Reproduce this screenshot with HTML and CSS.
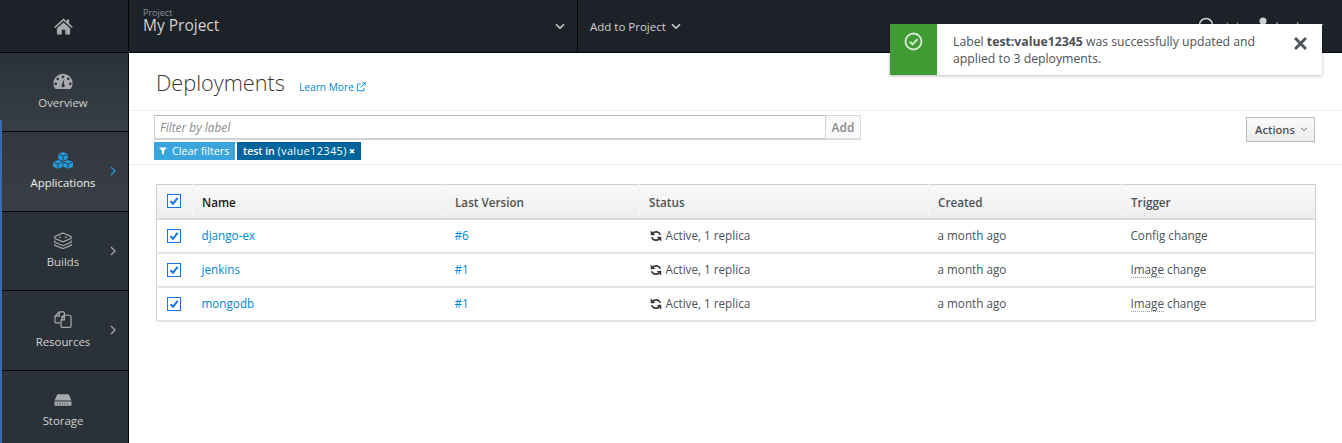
FILE: index.html
```html
<!DOCTYPE html>
<html lang="en">
<head>
<meta charset="utf-8">
<title>Deployments</title>
<link rel="stylesheet" href="styles.css">
</head>
<body>
<header class="topbar">
  <a class="home"><svg class="home-icon" viewBox="0 0 20 18"><path d="M10 0.5 L13.5 3.6 V1.5 H16 V5.8 L20 9.4 L18.8 10.6 L10 3 L1.2 10.6 L0 9.4Z M3 10.8 L10 4.8 L17 10.8 V17.5 H11.8 V12.5 H8.2 V17.5 H3Z"/></svg></a>
  <div class="project">
    <div class="project-names">
      <span class="project-label">Project</span>
      <span class="project-name">My Project</span>
    </div>
    <svg class="chev-down" viewBox="0 0 10 7"><path d="M1 1.2 L5 5.2 L9 1.2"/></svg>
  </div>
  <div class="add-project">Add to Project <svg class="chev-down" viewBox="0 0 10 7"><path d="M1 1.2 L5 5.2 L9 1.2"/></svg></div>
  <div class="top-right">
    <svg class="help" viewBox="0 0 16 16"><circle cx="8" cy="8" r="6.5"/></svg>
    <span class="top-right-text">status</span>
    <svg class="user" viewBox="0 0 10 16"><circle cx="5" cy="4" r="3.5"/><path d="M0 16 V11 Q5 6 10 11 V16Z"/></svg>
    <span class="top-right-text">developer</span>
  </div>
</header>

<div class="main">
  <nav class="sidebar">
    <a class="nav-item">
      <svg class="nav-icon" viewBox="0 0 22 18"><path fill-rule="evenodd" d="M11 0.5 A10.5 10.5 0 0 0 0.5 11 C0.5 13.5 1.3 15.6 2.7 17.2 H19.3 C20.7 15.6 21.5 13.5 21.5 11 A10.5 10.5 0 0 0 11 0.5Z M11 2.4 a1.5 1.5 0 1 1 -0.01 0Z M5.2 4.6 a1.5 1.5 0 1 1 -0.01 0Z M16.8 4.6 a1.5 1.5 0 1 1 -0.01 0Z M3 10 a1.5 1.5 0 1 1 -0.01 0Z M19 10 a1.5 1.5 0 1 1 -0.01 0Z M12.4 6 L12 12 a1.8 1.8 0 1 1 -2.6 1.2Z"/></svg>
      <span>Overview</span>
    </a>
    <a class="nav-item nav-active">
      <svg class="nav-icon" viewBox="0 0 22 18"><path d="M11 0 L16 2.2 V7.2 L11 9.4 L6 7.2 V2.2Z M6 8.4 L10.6 10.4 V15.6 L5.6 17.8 L0.4 15.6 V10.6Z M16 8.4 L21.6 10.6 V15.6 L16.4 17.8 L11.4 15.6 V10.4Z"/><path class="nav-icon-cut" d="M6.2 2.4 L11 4.4 L15.8 2.4 M11 4.4 V9 M0.8 10.8 L5.6 12.8 L10.4 10.8 M5.6 12.8 V17.4 M11.6 10.8 L16.4 12.8 L21.2 10.8 M16.4 12.8 V17.4"/></svg>
      <span>Applications</span>
      <svg class="chev-right" viewBox="0 0 6 10"><path d="M1 1 L5 5 L1 9"/></svg>
    </a>
    <a class="nav-item">
      <svg class="nav-icon nav-outline" viewBox="0 0 20 18"><path d="M10 1 L18.5 4.8 Q19 6 18.5 7 L10 10.5 L1.5 7 Q1 6 1.5 4.8Z M1.5 9 Q1 10 1.5 11 L10 14.5 L18.5 11 Q19 10 18.5 9 M1.5 12.6 Q1 13.6 1.5 14.2 L10 17.5 L18.5 14.2 Q19 13.6 18.5 12.6 M6 5.6 H8 M12 5.6 H14"/></svg>
      <span>Builds</span>
      <svg class="chev-right" viewBox="0 0 6 10"><path d="M1 1 L5 5 L1 9"/></svg>
    </a>
    <a class="nav-item">
      <svg class="nav-icon nav-outline" viewBox="0 0 20 18"><path d="M7 12.5 H2.5 Q1.5 12.5 1.5 11.5 V5.5 L6 1 H10.5 Q11.5 1 11.5 2 V4 M6 1 V5.5 H1.5 M8 6.5 L11.5 4.5 H17 Q18.5 4.5 18.5 6 V16 Q18.5 17.3 17 17.3 H9 Q8 17.3 8 16 V9.5 L11.5 4.5 V9.5 H8"/></svg>
      <span>Resources</span>
      <svg class="chev-right" viewBox="0 0 6 10"><path d="M1 1 L5 5 L1 9"/></svg>
    </a>
    <a class="nav-item">
      <svg class="nav-icon" viewBox="0 0 20 18"><path fill-rule="evenodd" d="M4 3.5 H16 L19 10 H1Z M1 11 H19 V15.5 H1Z M4 13 h1 v1 h-1Z M6.5 13 h1 v1 h-1Z M9 13 h1 v1 h-1Z M11.5 13 h1 v1 h-1Z M14 13 h1 v1 h-1Z"/></svg>
      <span>Storage</span>
    </a>
  </nav>

  <main class="content">
    <div class="page-head">
      <h1>Deployments</h1>
      <a class="learn">Learn More <svg class="ext" viewBox="0 0 12 12"><path d="M9.5 7 V10.5 H1.5 V2.5 H5.5 M7.5 1 H11 V4.5 M11 1 L5.5 6.5"/></svg></a>
    </div>
    <div class="filter-bar">
      <div class="filter-left">
        <div class="filter-row">
          <div class="filter-input">Filter by label</div>
          <div class="filter-add">Add</div>
        </div>
        <div class="chips">
          <span class="chip chip-clear"><svg class="funnel" viewBox="0 0 10 10"><path d="M0 0.5 H10 L6.2 5 V10 L3.8 8.4 V5Z"/></svg>Clear filters</span>
          <span class="chip chip-dark">test in <span class="chip-val">(value12345)</span> <b class="chip-x">×</b></span>
        </div>
      </div>
      <div class="actions">Actions <svg class="chev-small" viewBox="0 0 10 7"><path d="M1 1.2 L5 5.2 L9 1.2"/></svg></div>
    </div>

    <table class="table">
      <colgroup>
        <col class="c-check"><col class="c-name"><col class="c-ver"><col class="c-status"><col class="c-created"><col class="c-trigger">
      </colgroup>
      <thead>
        <tr>
          <th><span class="check"><svg viewBox="0 0 12 12"><path d="M2.4 6.2 L5 8.8 L9.6 2.8"/></svg></span></th>
          <th class="th-name">Name</th><th>Last Version</th><th>Status</th><th>Created</th><th>Trigger</th>
        </tr>
      </thead>
      <tbody>
        <tr>
          <td><span class="check"><svg viewBox="0 0 12 12"><path d="M2.4 6.2 L5 8.8 L9.6 2.8"/></svg></span></td>
          <td><a class="link">django-ex</a></td><td><a class="link">#6</a></td>
          <td><svg class="sync" viewBox="0 0 12 12"><path d="M10.4 4.8 A4.6 4.6 0 0 0 2.6 3.4 M1.6 7.2 A4.6 4.6 0 0 0 9.4 8.6"/><path class="sync-head" d="M0.6 0.6 L0.8 5.2 L5.4 5Z M11.4 11.4 L11.2 6.8 L6.6 7Z"/></svg>Active, 1 replica</td>
          <td>a month ago</td><td>Config change</td>
        </tr>
        <tr>
          <td><span class="check"><svg viewBox="0 0 12 12"><path d="M2.4 6.2 L5 8.8 L9.6 2.8"/></svg></span></td>
          <td><a class="link">jenkins</a></td><td><a class="link">#1</a></td>
          <td><svg class="sync" viewBox="0 0 12 12"><path d="M10.4 4.8 A4.6 4.6 0 0 0 2.6 3.4 M1.6 7.2 A4.6 4.6 0 0 0 9.4 8.6"/><path class="sync-head" d="M0.6 0.6 L0.8 5.2 L5.4 5Z M11.4 11.4 L11.2 6.8 L6.6 7Z"/></svg>Active, 1 replica</td>
          <td>a month ago</td><td><span class="dotted">Image</span> change</td>
        </tr>
        <tr>
          <td><span class="check"><svg viewBox="0 0 12 12"><path d="M2.4 6.2 L5 8.8 L9.6 2.8"/></svg></span></td>
          <td><a class="link">mongodb</a></td><td><a class="link">#1</a></td>
          <td><svg class="sync" viewBox="0 0 12 12"><path d="M10.4 4.8 A4.6 4.6 0 0 0 2.6 3.4 M1.6 7.2 A4.6 4.6 0 0 0 9.4 8.6"/><path class="sync-head" d="M0.6 0.6 L0.8 5.2 L5.4 5Z M11.4 11.4 L11.2 6.8 L6.6 7Z"/></svg>Active, 1 replica</td>
          <td>a month ago</td><td><span class="dotted">Image</span> change</td>
        </tr>
      </tbody>
    </table>
  </main>
</div>

<div class="toast">
  <div class="toast-side"><svg class="toast-icon" viewBox="0 0 20 20"><circle cx="10" cy="10" r="8.4"/><path d="M6 10.2 L9 13 L14.2 7.4"/></svg></div>
  <p class="toast-text">Label <strong>test:value12345</strong> was successfully updated and applied to 3 deployments.</p>
  <svg class="toast-close" viewBox="0 0 12 12"><path d="M1 1 L11 11 M11 1 L1 11"/></svg>
</div>
</body>
</html>
```
FILE: styles.css
```css
* { box-sizing: border-box; }
html, body { margin: 0; height: 100%; overflow: hidden; }
body { font-family: "Open Sans", sans-serif; font-size: 12px; color: #363636; background: #fff; position: relative; }

.topbar { display: flex; height: 53px; background: #1d2128; border-bottom: 1px solid #050608; color: #d1d1d1; }
.home { width: 129px; display: flex; align-items: center; justify-content: center; padding-right: 2px; border-right: 1px solid #050608; }
.home-icon { width: 19px; height: 17px; fill: #a8a9aa; }
.project { width: 449px; display: flex; align-items: center; justify-content: space-between; padding: 0 12px 0 14px; border-right: 1px solid #050608; height: 52px; }
.project-names { display: flex; flex-direction: column; margin-top: -9px; }
.project-label { font-size: 9px; line-height: 9px; color: #8f9195; margin-top: -2px; margin-bottom: -1px; }
.project-name { font-size: 15.5px; line-height: 18px; color: #d1d1d1; }
.chev-down { width: 10px; height: 7px; fill: none; stroke: #d1d1d1; stroke-width: 1.6; }
.add-project { display: flex; align-items: center; gap: 5px; padding-left: 12px; font-size: 11.5px; }
.top-right { margin-left: auto; display: flex; align-items: center; gap: 4px; padding: 0 19px 2px 0; }
.help { width: 16px; height: 16px; fill: none; stroke: #d1d1d1; stroke-width: 1.5; margin-right: 2px; }
.user { width: 10px; height: 16px; fill: #d1d1d1; margin-left: 2px; }
.top-right-text { font-size: 11px; }

.main { display: flex; height: 390px; }
.sidebar { position: relative; width: 129px; flex: none; background: #2b3138; border-right: 1px solid #050608; display: flex; flex-direction: column; }
.sidebar::before { content: ""; position: absolute; left: 0; top: 67px; bottom: 0; width: 1.5px; background: #3a6bab; z-index: 1; }
.nav-item { position: relative; height: 79px; flex: none; display: flex; flex-direction: column; align-items: center; padding: 20px 2px 0 0; gap: 5px; border-bottom: 1px solid #050608; color: #d1d1d1; font-size: 11.4px; line-height: 16px; }
.nav-item:nth-child(even) { height: 80px; gap: 6px; }
.nav-item:first-child { background: linear-gradient(#2b3138, #383e45); }
.nav-active { background: linear-gradient(#32373d, #393f45); color: #f1f1f1; }
.nav-icon { width: 20px; height: 17px; fill: #a8a9aa; flex: none; }
.nav-active .nav-icon { fill: #1f9de0; width: 22px; }
.nav-icon-cut { fill: none; stroke: #32373d; stroke-width: 1; }
.nav-outline { fill: none; stroke: #a8a9aa; stroke-width: 1.3; }
.chev-right { position: absolute; right: 12px; top: 34px; width: 6px; height: 10px; fill: none; stroke: #a8a9aa; stroke-width: 1.2; }
.nav-active .chev-right { stroke: #1f9de0; }

.content { flex: 1; min-width: 0; display: flex; flex-direction: column; }
.page-head { height: 58px; display: flex; align-items: baseline; padding: 13px 0 0 27px; border-bottom: 1px solid #ededed; gap: 14px; }
h1 { margin: 0; font-weight: 300; font-size: 21.7px; line-height: 34px; color: #363636; }
.learn { font-size: 10.2px; color: #0088ce; display: inline-flex; align-items: center; gap: 2px; }
.ext { width: 10px; height: 10px; fill: none; stroke: #0088ce; stroke-width: 1.1; }

.filter-bar { display: flex; justify-content: space-between; height: 54px; padding: 4px 27px 0 25px; border-bottom: 1px solid #ededed; }
.filter-row { display: flex; height: 25px; width: 707px; }
.filter-input { flex: 1; border: 1px solid #d1d1d1; border-top-color: #bbb; border-bottom-width: 2px; font-style: italic; color: #8b8d8f; padding: 0 5px; line-height: 22px; font-size: 11.9px; }
.filter-add { width: 35px; border: 1px solid #dcdcdc; border-left: 0; border-bottom-width: 2px; font-weight: 600; color: #8b8d8f; text-align: center; line-height: 23px; background: #fafafa; font-size: 12px; }
.chips { display: flex; gap: 2px; margin-top: 2px; }
.chip { height: 18px; line-height: 18px; color: #fff; font-size: 10.5px; font-weight: 600; padding: 0 5px; display: inline-flex; align-items: center; white-space: pre; }
.chip-clear { background: #39a5dc; width: 81px; padding: 0 0 0 5px; gap: 5px; font-size: 10.8px; font-weight: 400; }
.chip-dark { background: #00659c; width: 124px; padding: 0 0 0 6px; }
.chip-val { font-size: 11px; font-weight: 400; letter-spacing: .33px; }
.chip-x { font-size: 11px; margin-left: 2px; }
.funnel { width: 8px; height: 8px; fill: #fff; flex: none; }
.actions { width: 69px; height: 25px; margin-top: 2px; padding-left: 2px; border: 1px solid #bbb; background: linear-gradient(#fafafa, #ededed); display: flex; align-items: center; justify-content: center; gap: 5px; font-weight: 600; font-size: 11.2px; color: #4d5258; }
.chev-small { width: 8px; height: 5px; fill: none; stroke: #4d5258; stroke-width: 1.2; }

.table { margin: 19px 0 0 27px; width: 1159px; border-collapse: collapse; table-layout: fixed; border: 1px solid #d1d1d1; color: #363636; }
.c-check { width: 36px; }
.c-name { width: 253px; }
.c-ver { width: 194px; }
.c-status { width: 289px; }
.c-created { width: 193px; }
.c-trigger { width: 194px; }
th { height: 34px; padding: 1px 9px 0; background: linear-gradient(#fafafa, #ededed); border-bottom: 2px solid #d8d8d8; border-left: 1px solid #f5f5f5; text-align: left; font-weight: 600; font-size: 11.7px; color: #4d5258; }
th:first-child { border-left: 0; }
.th-name { color: #1a1a1a; }
td { height: 34px; border-bottom: 2px solid #e4e4e4; padding: 0 9px 2px; font-size: 11.7px; color: #4d5258; white-space: nowrap; }
th:first-child, td:first-child { padding: 0 0 0 10px; }
.check { display: block; width: 14px; height: 14px; border: 1px solid #1a73e8; background: #fff; }
.check svg { display: block; width: 12px; height: 12px; fill: none; stroke: #1a73e8; stroke-width: 2; }
.link { color: #0088ce; }
.sync { width: 12px; height: 12px; vertical-align: -2px; margin: 0 4px 0 1px; fill: none; stroke: #363636; stroke-width: 1.7; }
.sync-head { fill: #363636; stroke: none; }
.dotted { border-bottom: 1px dotted #9c9c9c; }

.toast { position: absolute; left: 890px; top: 24px; width: 432px; height: 51px; background: #fff; display: flex; box-shadow: 0 1px 3px rgba(0,0,0,.28); }
.toast-side { width: 47px; flex: none; background: #3f9c35; display: flex; justify-content: center; padding-top: 8px; }
.toast-icon { width: 19px; height: 19px; fill: none; stroke: #d6ebd3; stroke-width: 2; }
.toast-text { margin: 9px 0 0 16px; width: 330px; font-size: 12.25px; line-height: 17px; color: #4d5258; }
.toast-text strong { font-weight: 700; }
.toast-close { width: 13px; height: 13px; margin: 13px 0 0 11px; fill: none; stroke: #4d5258; stroke-width: 2.6; flex: none; }
```
